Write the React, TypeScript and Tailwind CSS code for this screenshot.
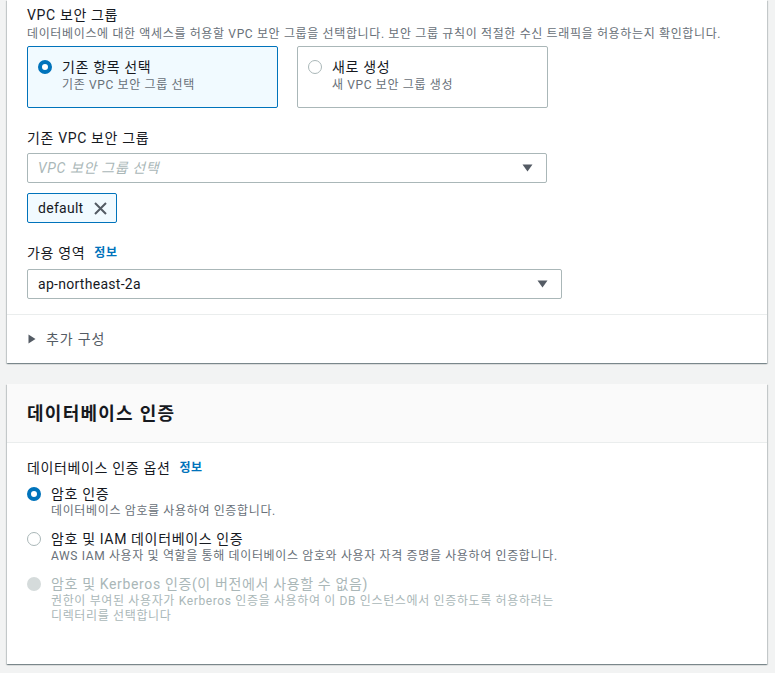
import React from 'react';

const FONT = { fontFamily: 'Roboto, "Noto Sans CJK KR", sans-serif' };

const Caret = () => (
    <svg width="11" height="8" viewBox="0 0 11 8" className="shrink-0">
        <path d="M0.5 0.5 L10.5 0.5 L5.5 7.5 Z" fill="#545b64" />
    </svg>
);

const Radio = ({ state }: { state: 'on' | 'off' | 'disabled' }) => {
    if (state === 'on') {
        return <span className="block w-[14px] h-[14px] rounded-full border-[4px] border-[#0073bb] bg-white shrink-0" />;
    }
    if (state === 'disabled') {
        return <span className="block w-[14px] h-[14px] rounded-full bg-[#d5dbdb] shrink-0" />;
    }
    return <span className="block w-[14px] h-[14px] rounded-full border-[1.5px] border-[#aab7b8] bg-white shrink-0" />;
};

const Info = () => <span className="ml-[9px] text-[12px] font-bold text-[#0073bb]">정보</span>;

const Tile = ({ selected, title, desc }: { selected?: boolean; title: string; desc: string }) => (
    <div
        className={`w-[251px] h-[62px] rounded-[2px] border flex items-start gap-[10px] pl-[10px] pt-[10px] ${selected ? 'border-[#0073bb] bg-[#f1faff]' : 'border-[#aab7b8] bg-white'}`}
    >
        <div className="h-[20px] flex items-center"><Radio state={selected ? 'on' : 'off'} /></div>
        <div>
            <div className="text-[14px] leading-[20px] text-[#16191f]">{title}</div>
            <div className="text-[12px] leading-[16px] text-[#687078]">{desc}</div>
        </div>
    </div>
);

const Option = ({ state, title, children }: { state: 'on' | 'off' | 'disabled'; title: string; children: React.ReactNode }) => {
    const dis = state === 'disabled';
    return (
        <div className="flex items-start gap-[10px]">
            <div className="h-[20px] flex items-center"><Radio state={state} /></div>
            <div>
                <div className={`text-[14px] leading-[20px] ${dis ? 'text-[#aab7b8]' : 'text-[#16191f]'}`}>{title}</div>
                <div className={`text-[12px] leading-[15px] ${dis ? 'text-[#aab7b8]' : 'text-[#687078]'}`}>{children}</div>
            </div>
        </div>
    );
};

export default function App() {
    return (
        <div className="w-[775px] h-[673px] bg-[#f2f3f3] overflow-hidden tracking-[0.04em]" style={FONT}>
            {/* 연결 패널 (하단부) */}
            <div className="ml-[7px] w-[760px] bg-white shadow-[0_1px_1px_0_rgba(0,28,36,0.3),1px_1px_1px_0_rgba(0,28,36,0.15),-1px_1px_1px_0_rgba(0,28,36,0.15)]">
                <div className="px-5 pt-[4px] pb-[15px]">
                    <div className="text-[14px] leading-[22px] text-[#16191f]">VPC 보안 그룹</div>
                    <div className="text-[12px] leading-[16px] text-[#687078] whitespace-nowrap">
                        데이터베이스에 대한 액세스를 허용할 VPC 보안 그룹을 선택합니다. 보안 그룹 규칙이 적절한 수신 트래픽을 허용하는지 확인합니다.
                    </div>
                    <div className="mt-[4px] flex gap-[19px]">
                        <Tile selected title="기존 항목 선택" desc="기존 VPC 보안 그룹 선택" />
                        <Tile title="새로 생성" desc="새 VPC 보안 그룹 생성" />
                    </div>

                    <div className="mt-[19px] text-[14px] leading-[22px] text-[#16191f]">기존 VPC 보안 그룹</div>
                    <div className="mt-[4px] w-[520px] h-[30px] rounded-[2px] border border-[#aab7b8] flex items-center justify-between pl-[10px] pr-[13px]">
                        <span className="text-[14px] italic text-[#aab7b8]">VPC 보안 그룹 선택</span>
                        <Caret />
                    </div>
                    <div className="mt-[10px] w-[90px] h-[30px] rounded-[2px] border border-[#0073bb] bg-[#f1faff] flex items-center pl-[10px] gap-[11px]">
                        <span className="text-[14px] text-[#16191f] tracking-[0.02em]">default</span>
                        <svg width="13" height="13" viewBox="0 0 13 13">
                            <path d="M1 1 L12 12 M12 1 L1 12" stroke="#545b64" strokeWidth="2" />
                        </svg>
                    </div>

                    <div className="mt-[19px] text-[14px] leading-[22px] text-[#16191f] flex items-center">
                        가용 영역<Info />
                    </div>
                    <div className="mt-[5px] w-[535px] h-[30px] rounded-[2px] border border-[#aab7b8] flex items-center justify-between pl-[10px] pr-[13px]">
                        <span className="text-[14px] text-[#16191f] tracking-[0.02em]">ap-northeast-2a</span>
                        <Caret />
                    </div>
                </div>
                <div className="border-t border-[#eaeded] h-[49px] pl-[21px] pr-5 flex items-center gap-[10px]">
                    <svg width="8" height="10" viewBox="0 0 8 10">
                        <path d="M0.5 0.5 L7.5 5 L0.5 9.5 Z" fill="#545b64" />
                    </svg>
                    <span className="text-[14px] text-[#545b64] tracking-[0.06em]">추가 구성</span>
                </div>
            </div>

            {/* 데이터베이스 인증 */}
            <div className="mt-[21px] ml-[7px] w-[760px] bg-white shadow-[0_1px_1px_0_rgba(0,28,36,0.3),1px_1px_1px_0_rgba(0,28,36,0.15),-1px_1px_1px_0_rgba(0,28,36,0.15)]">
                <div className="h-[59px] bg-[#fafafa] border-b border-[#eaeded] px-5 flex items-center">
                    <h2 className="text-[18px] font-bold text-[#16191f] tracking-[0.07em]">데이터베이스 인증</h2>
                </div>
                <div className="px-5 pt-[14px] pb-[40px]">
                    <div className="text-[14px] leading-[22px] text-[#16191f] flex items-center">
                        데이터베이스 인증 옵션<Info />
                    </div>
                    <div className="mt-[5px] flex flex-col gap-[10px]">
                        <Option state="on" title="암호 인증">데이터베이스 암호를 사용하여 인증합니다.</Option>
                        <Option state="off" title="암호 및 IAM 데이터베이스 인증">
                            AWS IAM 사용자 및 역할을 통해 데이터베이스 암호와 사용자 자격 증명을 사용하여 인증합니다.
                        </Option>
                        <Option state="disabled" title="암호 및 Kerberos 인증(이 버전에서 사용할 수 없음)">
                            권한이 부여된 사용자가 Kerberos 인증을 사용하여 이 DB 인스턴스에서 인증하도록 허용하려는
                            <br />
                            디렉터리를 선택합니다
                        </Option>
                    </div>
                </div>
            </div>
        </div>
    );
}
